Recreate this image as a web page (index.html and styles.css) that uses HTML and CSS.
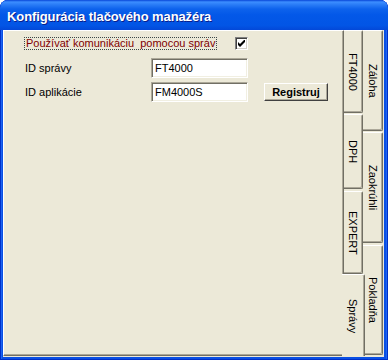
FILE: index.html
```html
<!DOCTYPE html>
<html>
<head>
<meta charset="utf-8">
<link rel="stylesheet" href="styles.css">
</head>
<body>
<div class="window">
  <div class="titlebar"><span class="title">Konfigurácia tlačového manažéra</span></div>
  <div class="client">
    <div class="panel">
      <div class="form">
        <div class="check-label"><span class="focus">Používať komunikáciu&nbsp; pomocou správ</span></div>
        <div class="check-cell">
          <span class="checkbox">
            <svg width="7" height="7" viewBox="0 0 7 7"><polygon points="0,2 2,4 7,-1 7,2 2,7 0,5" fill="#000"/></svg>
          </span>
        </div>
        <div class="spacer"></div>
        <div class="label">ID správy</div>
        <div class="field">FT4000</div>
        <div class="spacer"></div>
        <div class="label">ID aplikácie</div>
        <div class="field">FM4000S</div>
        <div class="btn-cell"><button class="btn">Registruj</button></div>
      </div>
    </div>
    <div class="tabs">
      <div class="tabcol inner">
        <div class="tab t-ft"><span>FT4000</span></div>
        <div class="tab t-dph"><span>DPH</span></div>
        <div class="tab t-exp"><span>EXPERT</span></div>
        <div class="tab sel t-spr"><span>Správy</span></div>
      </div>
      <div class="tabcol outer">
        <div class="tab t-zal"><span>Záloha</span></div>
        <div class="tab t-zao"><span>Zaokrúhli</span></div>
        <div class="tab t-pok"><span>Pokladňa</span></div>
      </div>
    </div>
  </div>
</div>
</body>
</html>
```
FILE: styles.css
```css
* { box-sizing: border-box; }
html, body { margin: 0; padding: 0; background: #fff; }
body { font-family: "Liberation Sans", Arial, sans-serif; font-size: 11px; color: #000; }

.window {
  width: 388px;
  height: 360px;
  display: flex;
  flex-direction: column;
  border-radius: 8px 8px 0 0;
  overflow: hidden;
  background: #0A50E4;
  box-shadow: inset 1px 0 0 #0030C8, inset -1px 0 0 #0030C8, inset 0 -1px 0 #0030C8, inset 2px 0 0 #1C64F2, inset -2px 0 0 #1C64F2;
  padding: 0 4px 3px 3px;
}

.titlebar {
  height: 30px;
  margin: 0 -4px 0 -3px;
  flex: none;
  background: linear-gradient(#0846D8 0, #3C8EFF 2px, #2E80F8 4px, #0D62EC 9px, #0358E8 50%, #0255E5 85%, #0348D8 100%);
  border-radius: 8px 8px 0 0;
  display: flex;
  align-items: center;
  padding-left: 7px;
}
.title {
  color: #fff;
  font-weight: bold;
  font-size: 13px;
  letter-spacing: -0.1px;
  text-shadow: 1px 1px 0 #0A1E8A;
  margin-top: 2px;
}

.client {
  flex: 1;
  display: flex;
  background: #ECE9D8;
  padding-bottom: 1px;
}

.panel {
  width: 341px;
  flex: none;
  border-left: 1px solid #fff;
  border-top: 1px solid #fff;
  border-right: 1px solid #716F64;
  border-bottom: 1px solid #716F64;
  box-shadow: inset -1px -1px 0 #ACA899;
}

.form {
  display: grid;
  grid-template-columns: 127px 97px 80px;
  grid-template-rows: 17px 20px 20px;
  row-gap: 4px;
  padding: 6px 0 0 20px;
}
.focus {
  display: inline-block;
  border: 1px dotted #3C4848;
  padding: 0 1px;
  line-height: 11px;
  height: 13px;
  color: #800000;
  white-space: nowrap;
  font-size: 11px;
}
.check-cell { display: flex; justify-content: flex-end; align-items: flex-start; }
.checkbox {
  width: 13px;
  height: 13px;
  background: #fff;
  border: 1px solid;
  border-color: #808080 #fff #fff #808080;
  box-shadow: inset 1px 1px 0 #404040, inset -1px -1px 0 #D4D0C8;
  display: flex;
  align-items: center;
  justify-content: center;
}

.label {
  padding-left: 1px;
  display: flex;
  align-items: center;
  font-size: 11px;
}
.field {
  height: 20px;
  background: #fff;
  border: 1px solid;
  border-color: #ACA899 #fff #fff #ACA899;
  box-shadow: inset 1px 1px 0 #716F64, inset -1px -1px 0 #F1EFE2;
  padding-left: 3px;
  display: flex;
  align-items: center;
  font-size: 11px;
}
.btn-cell { padding-left: 16px; padding-top: 1px; }
.btn {
  display: block;
  width: 64px;
  height: 18px;
  margin: 0;
  padding: 0;
  background: #ECE9D8;
  border: 1px solid;
  border-color: #fff #404040 #404040 #fff;
  box-shadow: inset -1px -1px 0 #ACA899;
  font-family: "Liberation Sans", Arial, sans-serif;
  font-weight: bold;
  font-size: 11px;
  color: #000;
}

.tabs {
  flex: none;
  display: flex;
  width: 40px;
}
.tabcol {
  display: flex;
  flex-direction: column;
}
.tabcol.inner { width: 19px; }
.tabcol.outer { width: 20px; }

.tab {
  background: #ECE9D8;
  border-top: 1px solid #fff;
  border-right: 1px solid #716F64;
  border-bottom: 1px solid #716F64;
  box-shadow: inset -1px -1px 0 #ACA899;
  border-radius: 0 2px 2px 0;
  display: flex;
  align-items: center;
  justify-content: center;
  flex: none;
}
.tab span {
  writing-mode: vertical-rl;
  white-space: nowrap;
  font-size: 11px;
}
.t-ft { height: 83px; }
.t-dph { height: 75px; margin-top: 1px; }
.t-exp { height: 83px; margin-top: 2px; }
.t-spr {
  height: 82px;
  width: 23px;
  margin-left: -2px;
  position: relative;
  z-index: 1;
  border-radius: 0 2px 0 0;
  box-shadow: inset -1px 0 0 #ACA899;
  border-bottom: none;
}
.t-spr span { margin-top: 2px; }
.t-zal { height: 101px; }
.t-zao { height: 111px; margin-top: 1px; }
.t-pok { height: 110px; margin-top: 2px; }
```
